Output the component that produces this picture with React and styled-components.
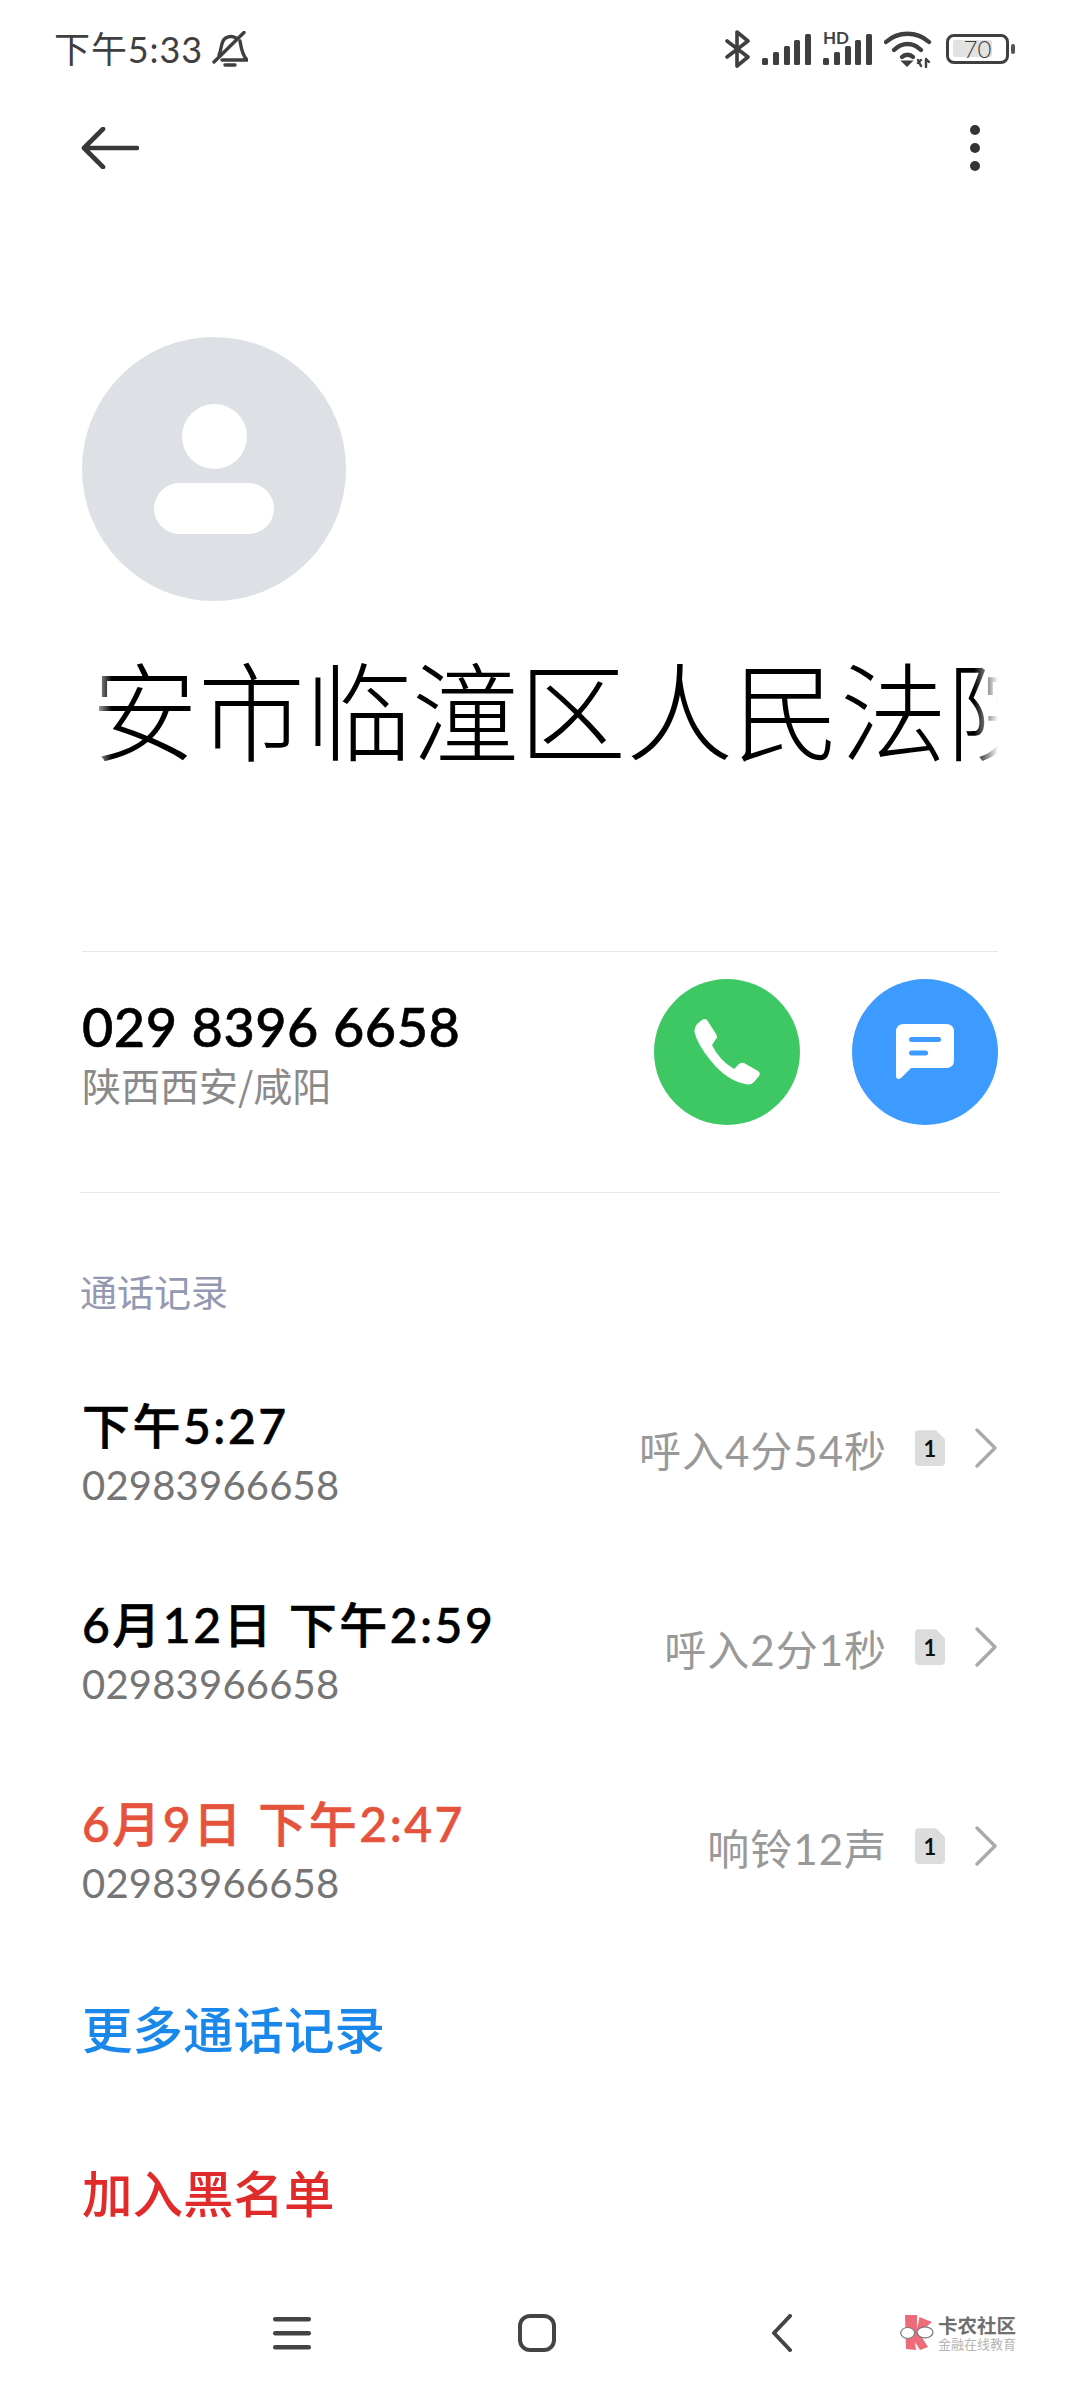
import React from 'react';
import styled, { createGlobalStyle } from 'styled-components';

const SANS = `Lato, "Noto Sans CJK SC", "Noto Sans", sans-serif`;

const GlobalStyle = createGlobalStyle`
  html, body {
    margin: 0;
    padding: 0;
    background: #fff;
    font-family: ${SANS};
  }
  * {
    box-sizing: border-box;
  }
`;

const Page = styled.div`
  width: 1080px;
  height: 2400px;
  background: #fff;
  overflow: hidden;
  display: flex;
  flex-direction: column;
`;

const StatusBar = styled.div`
  height: 98px;
  padding: 0 71px 0 54px;
  display: flex;
  align-items: center;
  justify-content: space-between;
  color: #3f3f3f;
`;

const StatusLeft = styled.div`
  display: flex;
  align-items: center;
  gap: 9px;
`;

const StatusTime = styled.span`
  font-size: 36px;
  line-height: 40px;
  letter-spacing: 0.9px;
`;

const StatusRight = styled.div`
  display: flex;
  align-items: center;
  gap: 11px;
`;

const Battery = styled.div`
  position: relative;
  width: 63px;
  height: 30px;
  margin-left: 3px;
  border: 3.5px solid #3f3f3f;
  border-radius: 8px;
  display: flex;
  align-items: center;
  justify-content: center;
  font-size: 24px;
  font-weight: 300;
  color: #3f3f3f;

  &::before {
    content: '';
    position: absolute;
    left: 3.5px;
    top: 3.5px;
    bottom: 3.5px;
    width: 70%;
    background: #e2e2e2;
    border-radius: 2px;
  }

  &::after {
    content: '';
    position: absolute;
    right: -9px;
    top: 7px;
    width: 4px;
    height: 10px;
    background: #555;
    border-radius: 2px;
  }
`;

const BatteryLevel = styled.span`
  position: relative;
  line-height: 1;
`;

const Toolbar = styled.div`
  height: 102px;
  padding: 0 100px 0 81px;
  display: flex;
  align-items: center;
  justify-content: space-between;
`;

const Dots = styled.div`
  display: flex;
  flex-direction: column;
  gap: 8px;
`;

const Dot = styled.span`
  width: 10px;
  height: 10px;
  border-radius: 50%;
  background: #333;
`;

const Content = styled.div`
  padding: 0 82px;
  flex: 1;
  display: flex;
  flex-direction: column;
`;

const Avatar = styled.div`
  width: 264px;
  height: 264px;
  margin-top: 139px;
  border-radius: 50%;
  background: #dde0e5;
  display: flex;
  flex-direction: column;
  align-items: center;
  padding-top: 67px;
`;

const AvatarHead = styled.span`
  width: 65px;
  height: 65px;
  border-radius: 50%;
  background: #fff;
`;

const AvatarBody = styled.span`
  width: 120px;
  height: 51px;
  margin-top: 14px;
  border-radius: 26px;
  background: #fff;
`;

const NameClip = styled.div`
  margin-top: 41px;
  height: 130px;
  overflow: hidden;
  white-space: nowrap;
  -webkit-mask-image: linear-gradient(to right, transparent 8px, #000 30px, #000 892px, transparent 916px);
  mask-image: linear-gradient(to right, transparent 8px, #000 30px, #000 892px, transparent 916px);
`;

const Name = styled.div`
  margin-left: -98px;
  font-size: 107px;
  line-height: 130px;
  font-weight: 300;
  color: #000;
  font-family: "Noto Sans CJK SC", sans-serif;
`;

const Divider = styled.div`
  height: 1px;
  background: #e8e8e8;
  margin-top: ${p => p.$top || 0}px;
  margin-left: ${p => p.$bleed || 0}px;
  margin-right: ${p => p.$bleed || 0}px;
`;

const ContactRow = styled.div`
  height: 240px;
  padding: 27px 0 67px;
  display: flex;
  justify-content: space-between;
  align-items: center;
`;

const ContactInfo = styled.div`
  display: flex;
  flex-direction: column;
  padding-top: 2px;
`;

const PhoneNumber = styled.div`
  font-size: 54px;
  line-height: 62px;
  font-weight: 500;
  color: #000;
  letter-spacing: 0.5px;
  -webkit-text-stroke: 0.6px #000;
`;

const Region = styled.div`
  font-size: 39px;
  line-height: 52px;
  font-weight: 400;
  color: #8a8a8a;
  font-family: "Noto Sans CJK SC", sans-serif;
`;

const Actions = styled.div`
  display: flex;
  gap: 52px;
`;

const ActionButton = styled.div`
  width: 146px;
  height: 146px;
  border-radius: 50%;
  background: ${p => p.$color};
  display: flex;
  align-items: center;
  justify-content: center;
`;

const SectionTitle = styled.div`
  padding: 70px 0 36px;
  font-size: 37px;
  line-height: 56px;
  font-weight: 400;
  color: #9498b0;
  margin-left: -2px;
  font-family: "Noto Sans CJK SC", sans-serif;
`;

const CallRow = styled.div`
  height: 199px;
  display: flex;
  justify-content: space-between;
  align-items: center;
`;

const CallInfo = styled.div`
  display: flex;
  flex-direction: column;
`;

const CallTime = styled.div`
  font-size: 48px;
  line-height: 61px;
  font-weight: 500;
  letter-spacing: 2.5px;
  color: ${p => (p.$missed ? '#e5533d' : '#000')};
  -webkit-text-stroke: 0.6px ${p => (p.$missed ? '#e5533d' : '#000')};
`;

const CallNumber = styled.div`
  font-size: 40px;
  line-height: 58px;
  font-weight: 400;
  color: #757575;
  letter-spacing: 0.2px;
`;

const CallMeta = styled.div`
  display: flex;
  align-items: center;
  margin-top: -13px;
`;

const CallResult = styled.span`
  font-size: 42px;
  font-weight: 400;
  color: #999;
  letter-spacing: 1px;
`;

const SimBadge = styled.span`
  width: 30px;
  height: 36px;
  margin-left: 28px;
  background: #dcdcdc;
  border-radius: 4px;
  clip-path: polygon(0 0, 70% 0, 100% 25%, 100% 100%, 0 100%);
  display: flex;
  align-items: center;
  justify-content: center;
  font-size: 22px;
  font-weight: 700;
  color: #111;
`;

const Chevron = styled.svg`
  margin-left: 29px;
  display: block;
`;

const LinkList = styled.div`
  margin-top: -7px;
  display: flex;
  flex-direction: column;
`;

const TextLink = styled.div`
  height: 164px;
  display: flex;
  align-items: center;
  font-size: 50.5px;
  font-weight: 500;
  color: ${p => p.$color};
  font-family: "Noto Sans CJK SC", sans-serif;
`;

const NavBar = styled.div`
  position: relative;
  height: 128px;
  padding: 0 0 8px 169px;
  display: flex;
  align-items: center;
`;

const NavCell = styled.div`
  width: 245px;
  display: flex;
  justify-content: center;
`;

const Watermark = styled.div`
  position: absolute;
  left: 900px;
  top: 41px;
  display: flex;
  align-items: center;
  gap: 2px;
`;

const WatermarkText = styled.div`
  display: flex;
  flex-direction: column;
  font-family: "Noto Sans CJK SC", sans-serif;
`;

const WatermarkTitle = styled.span`
  font-size: 19.5px;
  line-height: 22px;
  font-weight: 700;
  color: #6f6f6f;
`;

const WatermarkSub = styled.span`
  font-size: 13px;
  line-height: 16px;
  color: #b5b5b5;
`;

const BellOff = () => (
  <svg width="36" height="36" viewBox="0 0 36 36" fill="none" stroke="#3f3f3f" strokeWidth="3.4" strokeLinecap="round" strokeLinejoin="round">
    <path d="M2 31 L32 1.5" />
    <path d="M7 24 C9 20 9 14 11 10 C13 6 19 4 24 7" />
    <path d="M28 10 C29 16 30 24 35 29 L10 29" />
    <path d="M13 34 L23 34" />
  </svg>
);

const Bluetooth = () => (
  <svg width="26" height="38" viewBox="0 0 26 38" fill="none" stroke="#3f3f3f" strokeWidth="3.6" strokeLinecap="round" strokeLinejoin="round">
    <path d="M2 11 L23 27 L12 36 L12 2 L23 11 L2 27" />
  </svg>
);

const SIGNAL_BARS = [
  { x: 0, h: 7 },
  { x: 11, h: 13 },
  { x: 22, h: 19 },
  { x: 32, h: 25 },
  { x: 43, h: 31 },
];

const Signal = ({ hd }) => (
  <svg width="50" height="38" viewBox="0 0 50 38" fill="#3f3f3f">
    {SIGNAL_BARS.map(b => (
      <rect key={b.x} x={b.x} y={35 - b.h} width="6" height={b.h} rx="1.5" />
    ))}
    {hd && (
      <text x="0" y="14" fontSize="17" fontWeight="700" fontFamily="Lato, sans-serif">HD</text>
    )}
  </svg>
);

const Wifi = () => (
  <svg width="48" height="38" viewBox="0 0 48 38" fill="none" stroke="#3f3f3f" strokeWidth="4.4" strokeLinecap="round">
    <path d="M2 12 C14 1 33 1 45 12" />
    <path d="M10 20 C18 12 29 12 37 20" />
    <path d="M18 27 C21 24 26 24 29 27" />
    <path d="M20 32 L23 35 L26 32 Z" fill="#3f3f3f" strokeWidth="3" />
    <path d="M34 30 L37 36 M37 30 L34 33 M42 29 L42 37 M42 29 L45 32" strokeWidth="2.4" />
  </svg>
);

const BackArrow = () => (
  <svg width="58" height="42" viewBox="0 0 58 42" fill="none" stroke="#383838" strokeWidth="4.6" strokeLinecap="round" strokeLinejoin="round">
    <path d="M56 21 L3 21 M22 2 L3 21 L22 40" />
  </svg>
);

const PhoneIcon = () => (
  <svg width="66" height="66" viewBox="0 0 66 66" fill="#fff">
    <path d="M8 1 Q11 -1 13 1 L22 15 Q24 18 22 20 L18 26 Q25 41 40 50 L45 45 Q47 43 50 44 L64 52 Q67 54 65 57 L60 63 Q57 66 53 65.5 Q33 62 17 42 Q3 25 0.5 13 Q0 9 3 5 Z" />
  </svg>
);

const MessageIcon = () => (
  <svg width="58" height="56" viewBox="0 0 58 56">
    <path d="M8 0 H50 Q58 0 58 8 V36 Q58 44 50 44 H15 L5 54 Q0 57 0 51 V8 Q0 0 8 0 Z" fill="#fff" />
    <rect x="13" y="13" width="32" height="5" rx="2.5" fill="#3d9bff" />
    <rect x="13" y="26.5" width="19" height="5" rx="2.5" fill="#3d9bff" />
  </svg>
);

const MenuIcon = () => (
  <svg width="38" height="36" viewBox="0 0 38 36" fill="#444">
    <rect x="0" y="2" width="38" height="4.4" rx="2.2" />
    <rect x="0" y="16" width="38" height="4.4" rx="2.2" />
    <rect x="0" y="30" width="38" height="4.4" rx="2.2" />
  </svg>
);

const HomeIcon = () => (
  <svg width="38" height="38" viewBox="0 0 38 38" fill="none" stroke="#444" strokeWidth="4">
    <rect x="2" y="2" width="34" height="34" rx="10" />
  </svg>
);

const BackIcon = () => (
  <svg width="22" height="38" viewBox="0 0 22 38" fill="none" stroke="#444" strokeWidth="4" strokeLinecap="round" strokeLinejoin="round">
    <path d="M19 2 L3 19 L19 36" />
  </svg>
);

const WatermarkLogo = () => (
  <svg width="36" height="36" viewBox="0 0 36 36">
    <path d="M5 0 H17 V14 L19.5 2 L32 7 L19 18 L28 32 L20 35 L15 27 L16 35 L6 34 Z" fill="#ee6b7a" />
    <ellipse cx="7.7" cy="18" rx="7" ry="5.5" fill="#fff" stroke="#777" strokeWidth="1.2" />
    <ellipse cx="25" cy="17.3" rx="8" ry="5.5" fill="#fff" stroke="#777" strokeWidth="1.2" />
  </svg>
);

const CALLS = [
  { id: 1, time: '下午5:27', result: '呼入4分54秒' },
  { id: 2, time: '6月12日 下午2:59', result: '呼入2分1秒' },
  { id: 3, time: '6月9日 下午2:47', result: '响铃12声', missed: true },
];

const App = () => {
  return (
    <Page>
      <GlobalStyle />
      <StatusBar>
        <StatusLeft>
          <StatusTime>下午5:33</StatusTime>
          <BellOff />
        </StatusLeft>
        <StatusRight>
          <Bluetooth />
          <Signal />
          <Signal hd />
          <Wifi />
          <Battery>
            <BatteryLevel>70</BatteryLevel>
          </Battery>
        </StatusRight>
      </StatusBar>

      <Toolbar>
        <BackArrow />
        <Dots>
          <Dot />
          <Dot />
          <Dot />
        </Dots>
      </Toolbar>

      <Content>
        <Avatar>
          <AvatarHead />
          <AvatarBody />
        </Avatar>
        <NameClip>
          <Name>西安市临潼区人民法院</Name>
        </NameClip>
        <Divider $top={179} />
        <ContactRow>
          <ContactInfo>
            <PhoneNumber>029 8396 6658</PhoneNumber>
            <Region>陕西西安/咸阳</Region>
          </ContactInfo>
          <Actions>
            <ActionButton $color="#3ec863">
              <PhoneIcon />
            </ActionButton>
            <ActionButton $color="#3d9bff">
              <MessageIcon />
            </ActionButton>
          </Actions>
        </ContactRow>
        <Divider $bleed={-2} />
        <SectionTitle>通话记录</SectionTitle>
        {CALLS.map(call => (
          <CallRow key={call.id}>
            <CallInfo>
              <CallTime $missed={call.missed}>{call.time}</CallTime>
              <CallNumber>02983966658</CallNumber>
            </CallInfo>
            <CallMeta>
              <CallResult>{call.result}</CallResult>
              <SimBadge>1</SimBadge>
              <Chevron width="24" height="40" viewBox="0 0 24 40" fill="none" stroke="#aaa" strokeWidth="3.4" strokeLinecap="round" strokeLinejoin="round">
                <path d="M3 2 L21 20 L3 38" />
              </Chevron>
            </CallMeta>
          </CallRow>
        ))}
        <LinkList>
          <TextLink $color="#1a87ea">更多通话记录</TextLink>
          <TextLink $color="#e12a2a">加入黑名单</TextLink>
        </LinkList>
      </Content>

      <NavBar>
        <NavCell>
          <MenuIcon />
        </NavCell>
        <NavCell>
          <HomeIcon />
        </NavCell>
        <NavCell>
          <BackIcon />
        </NavCell>
        <Watermark>
          <WatermarkLogo />
          <WatermarkText>
            <WatermarkTitle>卡农社区</WatermarkTitle>
            <WatermarkSub>金融在线教育</WatermarkSub>
          </WatermarkText>
        </Watermark>
      </NavBar>
    </Page>
  );
};

export default App;
